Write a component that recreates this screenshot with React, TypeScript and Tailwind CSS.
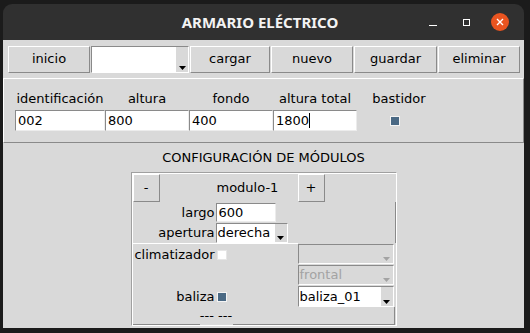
import React from "react";

const ui = "font-['DejaVu_Sans',sans-serif] text-[13px] leading-[16px] text-black";

function Button({ label, className = "" }: { label: string; className?: string }) {
  return (
    <div
      className={`flex items-center justify-center border border-t-white border-l-white border-r-[#8a8a8a] border-b-[#8a8a8a] bg-[#d9d9d9] ${className}`}
    >
      {label}
    </div>
  );
}

function Arrow({ disabled }: { disabled?: boolean }) {
  return (
    <svg width="7" height="4" viewBox="0 0 7 4">
      <path d="M0 0h7L3.5 4z" fill={disabled ? "#a3a3a3" : "#000"} />
    </svg>
  );
}

function Combo({
  value = "",
  disabled,
  className = "",
}: {
  value?: string;
  disabled?: boolean;
  className?: string;
}) {
  return (
    <div
      className={`flex border border-t-[#8a8a8a] border-l-[#8a8a8a] border-r-white border-b-white ${
        disabled ? "bg-[#d9d9d9] text-[#a3a3a3]" : "bg-white"
      } ${className}`}
    >
      <div className="flex flex-1 items-center overflow-hidden whitespace-nowrap pl-[1px]">{value}</div>
      <div className="flex w-[12px] items-end justify-center bg-[#d9d9d9] pb-[2px]">
        <Arrow disabled={disabled} />
      </div>
    </div>
  );
}

function Entry({ value, caret, className = "" }: { value: string; caret?: boolean; className?: string }) {
  return (
    <div
      className={`flex items-center border border-t-[#8a8a8a] border-l-[#8a8a8a] border-r-[#ececec] border-b-[#ececec] bg-white pl-[2px] ${className}`}
    >
      {value}
      {caret && <span className="h-[15px] w-[1px] bg-black" />}
    </div>
  );
}

function Check({ on }: { on?: boolean }) {
  return (
    <div
      className={`h-[10px] w-[10px] border ${
        on ? "border-[#f4f4f4] bg-[#4a6984]" : "border-[#e6e6e6] bg-white"
      }`}
    />
  );
}

const fields = [
  { label: "identificación", value: "002" },
  { label: "altura", value: "800" },
  { label: "fondo", value: "400" },
  { label: "altura total", value: "1800", caret: true },
];

export default function App() {
  return (
    <div className={`h-[333px] w-[530px] overflow-hidden bg-[#1b1b1b] pt-[4px] ${ui}`}>
      <div className="ml-[3px] w-[521px] overflow-hidden rounded-t-[9px]">
        {/* title bar */}
        <div className="grid h-[36px] grid-cols-[1fr_auto_1fr] items-center bg-[#303030]">
          <div />
          <div className="mr-[7px] font-['Noto_Sans',sans-serif] text-[15px] font-bold text-[#f3f3f3]">
            ARMARIO ELÉCTRICO
          </div>
          <div className="flex items-center justify-end pr-[15px]">
            <div className="mt-[6px] h-[1px] w-[8px] bg-white" />
            <div className="ml-[26px] h-[7px] w-[7px] border border-white" />
            <div className="ml-[21px] flex h-[18px] w-[18px] items-center justify-center rounded-full bg-[#e95420]">
              <svg width="8" height="8" viewBox="0 0 8 8">
                <path d="M1 1l6 6M7 1l-6 6" stroke="#fff" strokeWidth="1.4" />
              </svg>
            </div>
          </div>
        </div>

        <div className="h-[288px] overflow-hidden bg-[#d9d9d9]">
          {/* toolbar */}
          <div className="flex h-[38px] items-center gap-[1px] pl-[5px]">
            <Button label="inicio" className="h-[27px] w-[82px]" />
            <Combo className="h-[27px] w-[98px]" />
            <Button label="cargar" className="h-[27px] w-[80px]" />
            <Button label="nuevo" className="h-[27px] w-[82px]" />
            <Button label="guardar" className="h-[27px] w-[83px]" />
            <Button label="eliminar" className="h-[27px] w-[82px]" />
          </div>

          {/* cabinet fields */}
          <div className="h-[65px] border border-t-white border-l-white border-r-[#8a8a8a] border-b-[#8a8a8a] pl-[11px] pt-[12px]">
            <div className="grid grid-cols-[90px_84px_84px_84px_84px] gap-y-[3px]">
              {fields.map((f) => (
                <div key={f.label} className="h-[16px] text-center">
                  {f.label}
                </div>
              ))}
              <div className="h-[16px] text-center">bastidor</div>
              {fields.map((f) => (
                <Entry key={f.label} value={f.value} caret={f.caret} className="h-[21px]" />
              ))}
              <div className="flex items-center justify-center pr-[8px]">
                <Check on />
              </div>
            </div>
          </div>

          {/* module configuration */}
          <div className="flex flex-col items-center pt-[7px]">
            <div className="h-[16px]">CONFIGURACIÓN DE MÓDULOS</div>
            <div className="mt-[6px] w-[266px] border border-t-[#a0a0a0] border-l-[#a0a0a0] border-r-white border-b-white">
              <div className="border-t border-l border-white">
                <div className="flex h-[28px]">
                  <Button label="-" className="w-[27px]" />
                  <div className="flex w-[138px] items-center pl-[57px]">modulo-1</div>
                  <Button label="+" className="w-[27px]" />
                </div>

                <div className="flex flex-col gap-[1px] border-r border-[#8a8a8a] pt-[1px]">
                  <div className="flex h-[19px] items-center">
                    <div className="w-[83px] pr-[1px] text-right">largo</div>
                    <Entry value="600" className="h-[19px] w-[60px]" />
                  </div>
                  <div className="flex h-[20px] items-center">
                    <div className="w-[83px] pr-[1px] text-right">apertura</div>
                    <Combo value="derecha" className="h-[20px] w-[72px]" />
                  </div>
                </div>

                <div className="flex">
                  <div className="flex w-[165px] flex-col border-t border-white">
                    <div className="flex h-[21px] items-center">
                      <div className="w-[83px] pr-[1px] text-right">climatizador</div>
                      <div className="ml-[1px]">
                        <Check />
                      </div>
                    </div>
                    <div className="h-[21px]" />
                    <div className="flex h-[21px] items-center">
                      <div className="w-[83px] pr-[1px] text-right">baliza</div>
                      <div className="ml-[1px]">
                        <Check on />
                      </div>
                    </div>
                  </div>
                  <div className="flex w-[96px] flex-col gap-[1px] pt-[1px]">
                    <Combo disabled className="h-[20px]" />
                    <Combo disabled value="frontal" className="h-[20px]" />
                    <Combo value="baliza_01" className="h-[21px]" />
                  </div>
                </div>

                <div className="flex h-[18px] w-[262px]">
                  <div className="w-[67px] border-b border-[#8a8a8a]" />
                  <div className="flex w-[33px] items-center justify-center">--- ---</div>
                  <div className="flex-1 border-r border-b border-[#8a8a8a]" />
                </div>
              </div>
            </div>
          </div>
        </div>
      </div>
    </div>
  );
}
